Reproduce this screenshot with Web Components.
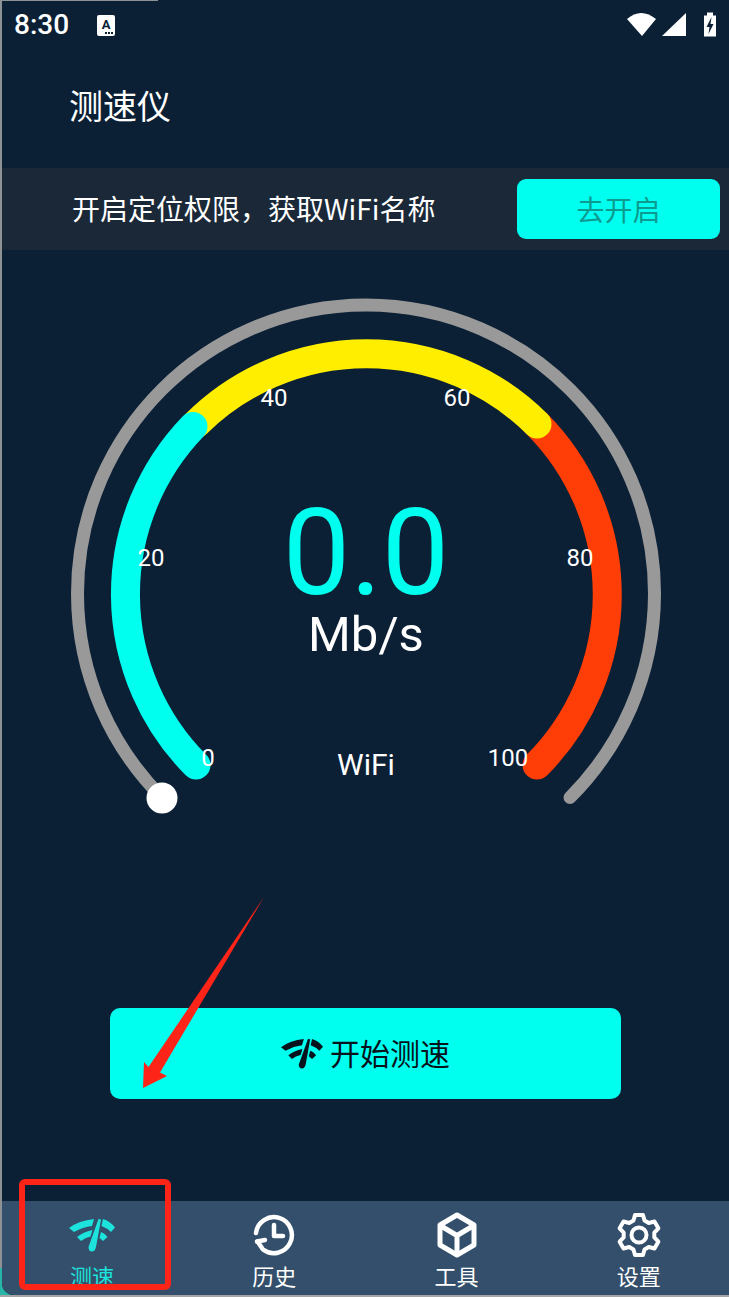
<!DOCTYPE html>
<html lang="zh">
<head>
<meta charset="utf-8">
<title>测速仪</title>
<style>
html,body{margin:0;padding:0;width:729px;height:1297px;overflow:hidden;}
body{font-family:Roboto,"Noto Sans CJK SC",sans-serif;color:#fff;position:relative;background:linear-gradient(#8f9294 0 1268px,#26b5a6 1268px 1295px,#a5a5a5 1295px);}
</style>
</head>
<body>
<template id="t-shell">
<style>
:host{display:flex;flex-direction:column;width:727px;height:1295px;margin-left:2px;background:#0b1f35;border-bottom-left-radius:12px;overflow:hidden;}
</style>
<slot></slot>
</template>

<template id="t-status">
<style>
:host{display:flex;align-items:center;height:50px;padding:0 9px 0 12px;box-sizing:border-box;color:#fff;flex:none;}
.time{font:500 28px/50px Roboto,sans-serif;width:83px;}
.note{width:18px;height:21px;background:#fff;border-radius:2px;position:relative;color:#0b1f35;font:700 13px/19px Roboto,sans-serif;text-align:center;}
.dots{position:absolute;right:2px;bottom:2px;width:8px;height:2px;background:repeating-linear-gradient(90deg,#0b1f35 0 2px,transparent 2px 3px);}
.right{margin-left:auto;display:flex;}
</style>
<span class="time">8:30</span>
<span class="note">A<i class="dots"></i></span>
<span class="right">
<svg width="93" height="30" viewBox="0 0 93 30"><path d="M0 9Q14-3 29 9L15 26Z" fill="#fff"/><path d="M35 26H59V3Z" fill="#fff"/><path d="M77 5.500h3V2.500h6v3h3V26.500H77Z" fill="#fff"/><path d="M84.500 7 79.500 17h3l-1 7 5-10h-3Z" fill="#0b1f35"/></svg>
</span>
</template>

<template id="t-title">
<style>
:host{display:flex;align-items:center;height:118px;padding:0 0 8px 67px;box-sizing:border-box;flex:none;font:400 34px/1 "Noto Sans CJK SC",sans-serif;color:#fff;}
</style>
<slot></slot>
</template>

<template id="t-banner">
<style>
:host{display:flex;align-items:center;height:82px;padding:0 9px 0 70px;box-sizing:border-box;flex:none;background:#1a2838;color:#fff;font:400 28px/1 "Noto Sans CJK SC",sans-serif;}
.msg{flex:1;white-space:nowrap;padding-bottom:3px;}
button{all:unset;box-sizing:border-box;width:203px;height:60px;border-radius:9px;background:#00ffee;color:#0d9a90;text-align:center;font:400 28px/58px "Noto Sans CJK SC",sans-serif;}
</style>
<span class="msg"><slot></slot></span>
<button>去开启</button>
</template>

<template id="t-gauge">
<style>
:host{display:block;position:relative;width:600px;height:530px;margin:40px auto 0;flex:none;color:#fff;font-family:Roboto,sans-serif;}
svg{position:absolute;left:0;top:0;}
span{position:absolute;transform:translate(-50%,-50%);white-space:nowrap;line-height:1;}
.t{font-size:24px;}
.v{font-size:120px;line-height:.8;color:#00ffee;left:300.500px;top:263px;}
.u{font-size:49px;left:300.500px;top:344px;}
.w{font-size:30px;left:300.500px;top:475px;}
</style>
<svg width="600" height="530" viewBox="0 0 600 530" fill="none">
<path d="M96 507.500A288.500 288.500 0 1 1 504 507.500" stroke="#999" stroke-width="13" stroke-linecap="round"/>
<path d="M471 134A242 242 0 0 1 471 475" stroke="#ff3d06" stroke-width="29" stroke-linecap="round"/>
<path d="M130 134A242 242 0 0 1 471 134" stroke="#ffee00" stroke-width="29" stroke-linecap="round"/>
<path d="M130 475A242 242 0 0 1 127 136.500" stroke="#00ffee" stroke-width="29" stroke-linecap="round"/>
<circle cx="96" cy="508" r="15.500" fill="#fff"/>
</svg>
<span class="t" style="left:142.500px;top:468px">0</span>
<span class="t" style="left:85.500px;top:268px">20</span>
<span class="t" style="left:208.500px;top:108px">40</span>
<span class="t" style="left:391.500px;top:108px">60</span>
<span class="t" style="left:514.500px;top:268px">80</span>
<span class="t" style="left:442.500px;top:468px">100</span>
<span class="v">0.0</span>
<span class="u">Mb/s</span>
<span class="w">WiFi</span>
</template>

<template id="t-speed">
<style>
:host{display:inline-flex;flex:none;color:inherit;}
svg{display:block;width:100%;height:auto;}
</style>
<svg viewBox="0 0 46 34" fill="currentColor">
<path d="M0 10Q10 2.500 25 1L23 8Q14 9 5 14Z"/>
<path d="M34 1Q41 3 46 9.500L42 14Q38 10 32.500 8Z"/>
<path d="M8 19Q14 14 23.500 12L21.500 18.500Q16 19.500 12 23Z"/>
<path d="M32 14Q35.500 15 38.500 19L34 23Q32 21 30.500 20Z"/>
<path d="M29.500 1 32 1.500 27 29Q26 33.500 23 33.500 19.500 33.500 19.500 29Z"/>
</svg>
</template>

<template id="t-start">
<style>
:host{display:flex;align-items:center;justify-content:center;gap:7px;height:91px;margin:188px 108px 0 108px;box-sizing:border-box;flex:none;background:#00ffee;border-radius:10px;color:#07121c;font:400 30px/1 "Noto Sans CJK SC",sans-serif;}
speed-icon{width:42px;}
span{padding-bottom:4px;}
</style>
<speed-icon></speed-icon><span><slot></slot></span>
</template>

<template id="t-nav">
<style>
:host{display:grid;grid-template-columns:repeat(4,1fr);margin:auto -1px 0 -1px;height:94px;flex:none;background:#334f6b;}
</style>
<slot></slot>
</template>

<template id="t-tab">
<style>
:host{display:flex;flex-direction:column;align-items:center;color:#fff;font:400 22px/24px "Noto Sans CJK SC",sans-serif;}
.ic{height:62px;display:flex;align-items:center;justify-content:center;padding-top:5px;box-sizing:border-box;}
:host([active]){color:#1ce3dc;}
</style>
<div class="ic"><slot name="icon"></slot></div>
<slot></slot>
</template>

<template id="t-notes">
<style>
:host{display:block;position:absolute;left:0;top:0;width:729px;height:1297px;pointer-events:none;}
svg{display:block;}
</style>
<svg width="729" height="1297" viewBox="0 0 729 1297" fill="none">
<rect x="22" y="1182" width="146" height="105" rx="3" stroke="#ff2418" stroke-width="6"/>
<path d="M264 897 148.500 1067 144 1062 143 1088 167 1076 160 1072.500Z" fill="#ff2418"/>
<path d="M0 .5H158" stroke="#8f9294" stroke-width="1"/>
</svg>
</template>

<app-shell>
  <status-bar></status-bar>
  <title-bar>测速仪</title-bar>
  <location-banner>开启定位权限，获取WiFi名称</location-banner>
  <speed-gauge></speed-gauge>
  <start-button>开始测速</start-button>
  <bottom-nav>
    <nav-tab active><speed-icon slot="icon" style="width:46px"></speed-icon>测速</nav-tab>
    <nav-tab>
      <svg slot="icon" width="46" height="46" viewBox="0 0 46 46" fill="none" stroke="#fff" stroke-width="4.500" stroke-linecap="round" stroke-linejoin="round"><path d="M5 21A18 18 0 1 1 12 37.500"/><path d="M6 29.500 14 28"/><path d="M6.500 29.500 11 36"/><path d="M23 13V24H32"/></svg>
      历史
    </nav-tab>
    <nav-tab>
      <svg slot="icon" width="46" height="46" viewBox="0 0 46 46" fill="none" stroke="#fff" stroke-width="5" stroke-linejoin="round" stroke-linecap="round"><path d="M23 3 40 13V33L23 43 6 33V13Z"/><path d="M7 14 23 23.500 39 14M23 23.500V42"/></svg>
      工具
    </nav-tab>
    <nav-tab>
      <svg slot="icon" width="46" height="46" viewBox="0 0 46 46" fill="none" stroke="#fff" stroke-width="4" stroke-linejoin="round"><path id="gear"/><circle cx="23" cy="23" r="7.500"/></svg>
      设置
    </nav-tab>
  </bottom-nav>
</app-shell>
<annotation-layer></annotation-layer>

<script>
function reg(name,tpl){
  customElements.define(name,class extends HTMLElement{
    constructor(){super();this.attachShadow({mode:"open"}).appendChild(document.getElementById(tpl).content.cloneNode(true));}
  });
}
reg("app-shell","t-shell");
reg("status-bar","t-status");
reg("title-bar","t-title");
reg("location-banner","t-banner");
reg("speed-gauge","t-gauge");
reg("speed-icon","t-speed");
reg("start-button","t-start");
reg("bottom-nav","t-nav");
reg("nav-tab","t-tab");
reg("annotation-layer","t-notes");
(function(){
  var d="",r=Math.PI/180;
  for(var i=0;i<6;i++){
    var a=-90+i*60;
    [[15.500,-21],[20.500,-11],[20.500,11],[15.500,21]].forEach(function(p){
      var x=23+p[0]*Math.cos((a+p[1])*r),y=23+p[0]*Math.sin((a+p[1])*r);
      d+=(d?"L":"M")+x.toFixed(2)+" "+y.toFixed(2);
    });
  }
  document.getElementById("gear").setAttribute("d",d+"Z");
})();
</script>
</body>
</html>
